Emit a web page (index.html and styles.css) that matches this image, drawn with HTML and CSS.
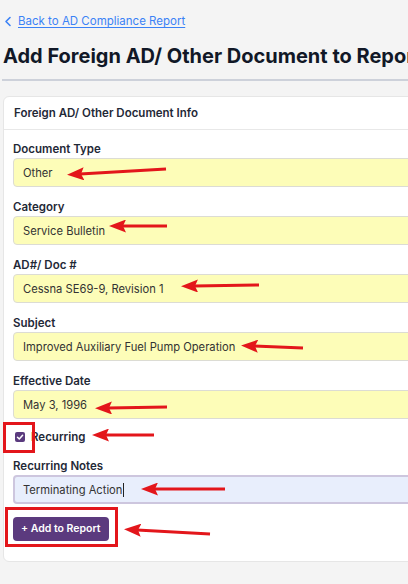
FILE: index.html
```html
<!DOCTYPE html>
<html>
<head>
<meta charset="utf-8">
<link rel="stylesheet" href="styles.css">
</head>
<body>
<div class="page">
  <a class="back" href="#">
    <svg class="chev" width="8" height="11" viewBox="0 0 8 11"><path d="M6 1.5 L2 5.5 L6 9.5" fill="none" stroke="#3b82f6" stroke-width="1.6" stroke-linecap="round" stroke-linejoin="round"/></svg>
    <span class="back-text">Back to AD Compliance Report</span>
  </a>
  <h1 class="title">Add Foreign AD/ Other Document to Report</h1>
  <div class="rule"></div>
  <div class="card">
    <div class="card-head">Foreign AD/ Other Document Info</div>
    <div class="card-body">
      <div class="field">
        <div class="label">Document Type</div>
        <div class="input">Other</div>
      </div>
      <div class="field">
        <div class="label">Category</div>
        <div class="input">Service Bulletin</div>
      </div>
      <div class="field">
        <div class="label">AD#/ Doc #</div>
        <div class="input">Cessna SE69-9, Revision 1</div>
      </div>
      <div class="field">
        <div class="label">Subject</div>
        <div class="input">Improved Auxiliary Fuel Pump Operation</div>
      </div>
      <div class="field">
        <div class="label">Effective Date</div>
        <div class="input">May 3, 1996</div>
      </div>
      <div class="check-row">
        <span class="checkbox">
          <svg width="10" height="10" viewBox="0 0 10 10"><path d="M2.5 5.2 L4.3 7 L7.6 3.3" fill="none" stroke="#fff" stroke-width="1.5" stroke-linecap="round" stroke-linejoin="round"/></svg>
        </span>
        <span class="check-label">Recurring</span>
      </div>
      <div class="field">
        <div class="label">Recurring Notes</div>
        <div class="input notes">Terminating Action<span class="caret"></span></div>
      </div>
      <button class="btn">+ Add to Report</button>
    </div>
  </div>
</div>
<svg class="marks" width="408" height="584" viewBox="0 0 408 584">
  <defs>
    <marker id="ah" markerUnits="userSpaceOnUse" markerWidth="17" markerHeight="13" refX="4" refY="6.5" orient="auto">
      <path d="M0,0 L17,6.5 L0,13 L3,6.5 z" fill="#e3161b"/>
    </marker>
  </defs>
  <g stroke="#e3161b" stroke-width="3" fill="none">
    <line x1="166" y1="169" x2="80" y2="174" marker-end="url(#ah)"/>
    <line x1="167" y1="226" x2="122" y2="226" marker-end="url(#ah)"/>
    <line x1="259" y1="285" x2="194" y2="286" marker-end="url(#ah)"/>
    <line x1="303" y1="348" x2="254" y2="346" marker-end="url(#ah)"/>
    <line x1="167" y1="407" x2="108" y2="408" marker-end="url(#ah)"/>
    <line x1="154" y1="435" x2="105" y2="435" marker-end="url(#ah)"/>
    <line x1="225" y1="489" x2="154" y2="489" marker-end="url(#ah)"/>
    <line x1="210" y1="534" x2="137" y2="530" marker-end="url(#ah)"/>
    <rect x="4.5" y="423.5" width="29" height="28"/>
    <rect x="6.5" y="508.5" width="110" height="37"/>
  </g>
</svg>
</body>
</html>
```

FILE: styles.css
```css
html, body {
  margin: 0;
  padding: 0;
}
body {
  background: #f4f4f4;
  font-family: "Inter", "Noto Sans", sans-serif;
  width: 408px;
  height: 584px;
  overflow: hidden;
  position: relative;
}
.page {
  width: 460px;
  padding: 12px 0 0 3px;
}
.back {
  display: flex;
  align-items: center;
  gap: 6px;
  height: 18px;
  padding-left: 1px;
  text-decoration: none;
}
.back-text {
  color: #3b82f6;
  font-size: 11.5px;
  text-decoration: underline;
  text-underline-offset: 2px;
}
.title {
  margin: 12px 0 0 0;
  font-size: 20px;
  line-height: 28px;
  font-weight: 700;
  color: #111827;
  white-space: nowrap;
}
.rule {
  margin-top: 9px;
  height: 2px;
  background: #cdd1da;
  margin-left: -1px;
}
.card {
  margin-top: 15px;
  background: #fff;
  border: 1px solid #e6e6e6;
  border-radius: 6px;
}
.card-head {
  height: 32px;
  display: flex;
  align-items: center;
  padding-left: 10px;
  font-size: 11.5px;
  font-weight: 600;
  color: #1f2937;
  border-bottom: 1px solid #e8e8e8;
}
.card-body {
  padding: 11px 0 20px 9px;
}
.field {
  margin-bottom: 12px;
}
.label {
  font-size: 11.5px;
  line-height: 16px;
  font-weight: 600;
  color: #1f2937;
  margin-bottom: 1px;
}
.input {
  box-sizing: border-box;
  height: 29px;
  background: #fdfdb8;
  border: 1px solid #dcdcd4;
  border-radius: 4px;
  padding-left: 9px;
  display: flex;
  align-items: center;
  font-size: 11.2px;
  color: #333;
}
.input.notes {
  background: #e8eefc;
  border: 2px solid #cdc6de;
  padding-left: 8px;
}
.caret {
  display: inline-block;
  width: 1px;
  height: 14px;
  background: #222;
  margin-left: 1px;
}
.check-row {
  display: flex;
  align-items: center;
  height: 16px;
  margin: -2px 0 13px 2px;
  gap: 6px;
}
.checkbox {
  width: 10px;
  height: 10px;
  border-radius: 2px;
  background: #5a3a7e;
  display: flex;
  align-items: center;
  justify-content: center;
}
.check-label {
  font-size: 11.5px;
  font-weight: 600;
  color: #1f2937;
}
.btn {
  height: 24px;
  padding: 0 8px;
  border: none;
  border-radius: 4px;
  background: #5b3a7e;
  color: #fff;
  font-family: inherit;
  font-size: 10.5px;
  font-weight: 600;
}
.marks {
  position: absolute;
  left: 0;
  top: 0;
  pointer-events: none;
}
```
